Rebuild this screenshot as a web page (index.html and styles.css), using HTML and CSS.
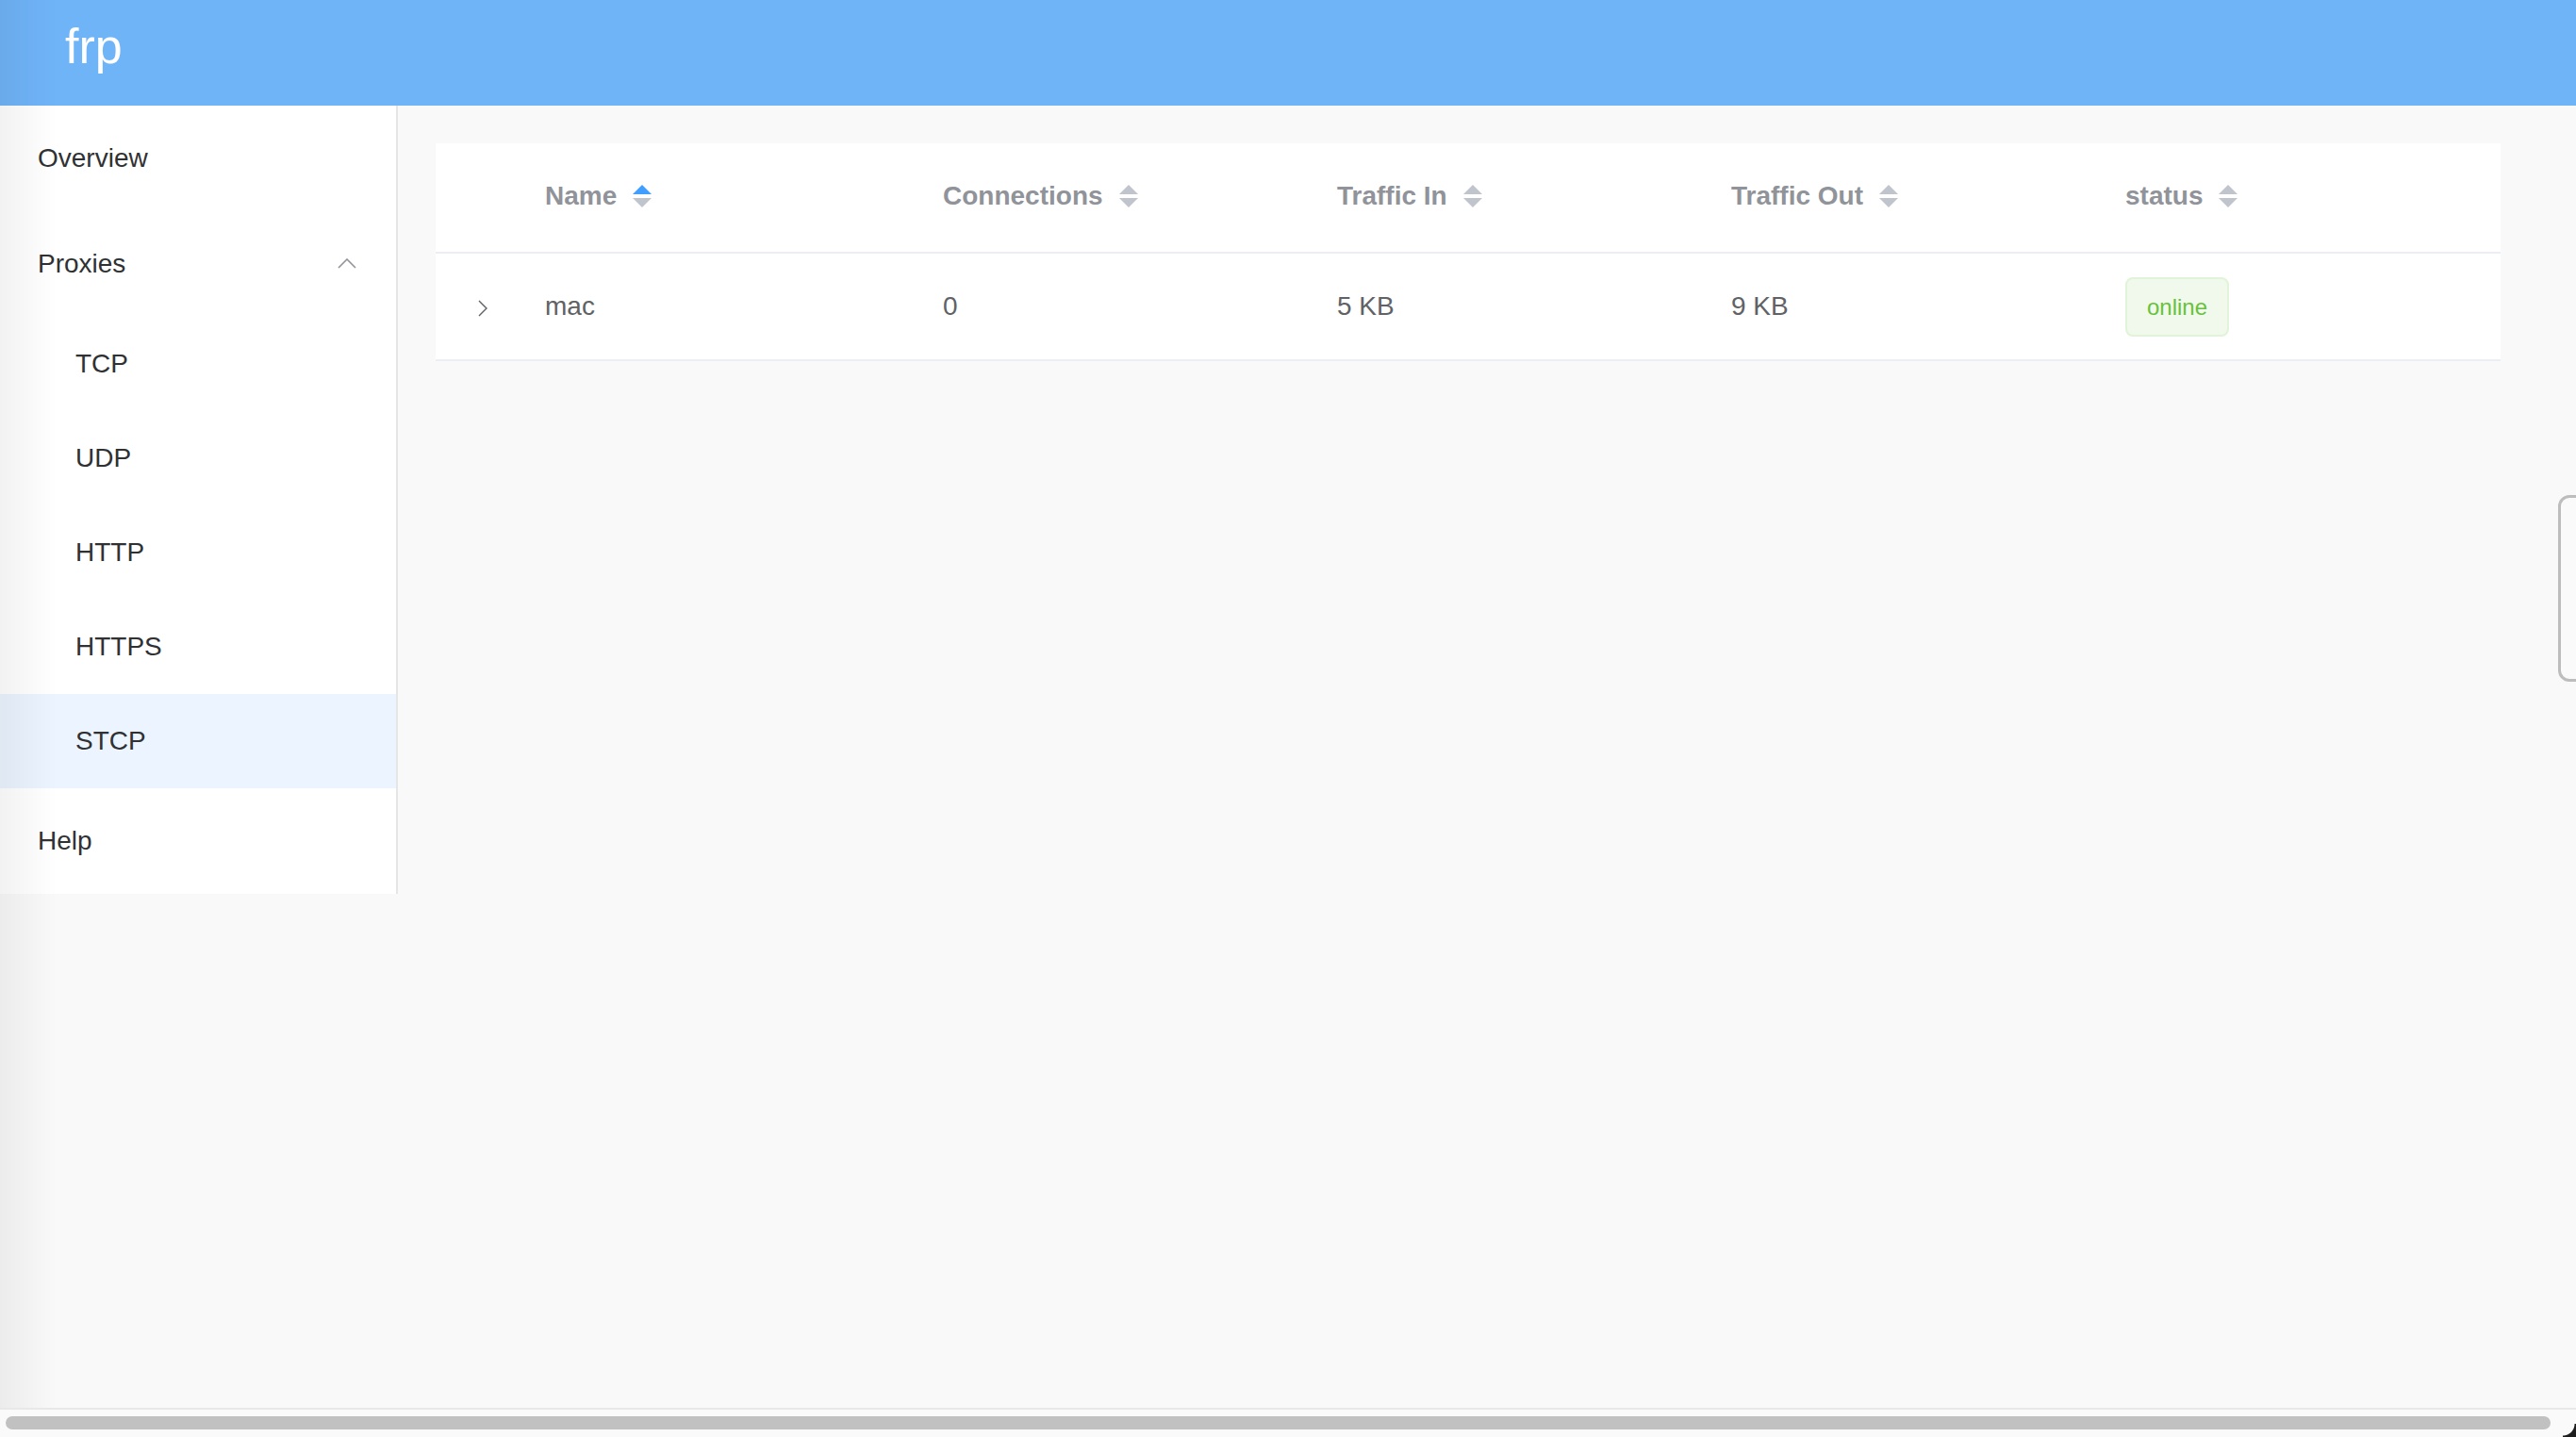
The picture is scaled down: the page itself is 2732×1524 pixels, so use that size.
FILE: index.html
```html
<!DOCTYPE html>
<html lang="en">
<head>
<meta charset="utf-8">
<title>frp</title>
<link rel="stylesheet" href="styles.css">
</head>
<body>
<header class="topbar"><span class="brand">frp</span></header>
<div class="layout">
  <aside class="sidebar">
    <ul class="menu">
      <li class="menu-item">Overview</li>
      <li class="menu-item submenu-title">Proxies
        <svg class="chev" width="20" height="11" viewBox="0 0 20 11"><path d="M1 10 L10 1 L19 10" fill="none" stroke="#909399" stroke-width="1.6"/></svg>
      </li>
      <li class="sub-item">TCP</li>
      <li class="sub-item">UDP</li>
      <li class="sub-item">HTTP</li>
      <li class="sub-item">HTTPS</li>
      <li class="sub-item active">STCP</li>
      <li class="menu-item">Help</li>
    </ul>
  </aside>
  <main class="main">
    <div class="table">
      <div class="th"></div>
      <div class="th"><span>Name</span><span class="caret"><i class="up on"></i><i class="down"></i></span></div>
      <div class="th"><span>Connections</span><span class="caret"><i class="up"></i><i class="down"></i></span></div>
      <div class="th"><span>Traffic In</span><span class="caret"><i class="up"></i><i class="down"></i></span></div>
      <div class="th"><span>Traffic Out</span><span class="caret"><i class="up"></i><i class="down"></i></span></div>
      <div class="th"><span>status</span><span class="caret"><i class="up"></i><i class="down"></i></span></div>

      <div class="td expand"><svg width="10" height="18" viewBox="0 0 10 18"><path d="M1 1 L9 9 L1 17" fill="none" stroke="#606266" stroke-width="1.4"/></svg></div>
      <div class="td">mac</div>
      <div class="td">0</div>
      <div class="td">5 KB</div>
      <div class="td">9 KB</div>
      <div class="td"><span class="tag">online</span></div>
    </div>
  </main>
</div>
<div class="edge-shadow"></div>
<div class="side-handle"></div>
<div class="hscroll"><div class="thumb"></div></div>
<div class="corner"></div>
</body>
</html>
```
FILE: styles.css
```css
* { box-sizing: border-box; }
html, body {
  margin: 0;
  padding: 0;
  height: 1524px;
  overflow: hidden;
}
body {
  background: #f9f9f9;
  font-family: "Liberation Sans", Arial, Helvetica, sans-serif;
  color: #303133;
}
.topbar {
  height: 112px;
  background: #70b4f8;
  display: flex;
  align-items: center;
  padding: 0 0 14px 69px;
}
.brand {
  color: #ffffff;
  font-size: 52px;
  line-height: 56px;
}
.layout {
  display: flex;
  align-items: flex-start;
}
.sidebar {
  width: 422px;
  flex: none;
  background: #ffffff;
  border-right: 2px solid #e6e6e6;
}
.menu {
  list-style: none;
  margin: 0;
  padding: 0;
}
.menu-item {
  height: 112px;
  line-height: 112px;
  padding-left: 40px;
  font-size: 28px;
  color: #303133;
}
.submenu-title {
  display: flex;
  align-items: center;
  justify-content: space-between;
  padding-right: 42px;
}
.chev { display: block; margin-top: -2px; }
.sub-item {
  height: 100px;
  line-height: 100px;
  padding-left: 80px;
  font-size: 28px;
  color: #303133;
}
.sub-item.active { background: #ecf5ff; }

.main {
  flex: 1;
  padding: 40px 80px 40px 40px;
}
.table {
  background: #ffffff;
  display: grid;
  grid-template-columns: 96px 422px repeat(4, 1fr);
}
.th {
  height: 117px;
  border-bottom: 2px solid #ebeef5;
  display: flex;
  align-items: center;
  padding-left: 20px;
  font-size: 28px;
  font-weight: bold;
  color: #909399;
  padding-bottom: 4px;
}
.caret {
  display: inline-flex;
  flex-direction: column;
  justify-content: space-between;
  height: 24px;
  margin-left: 17px;
}
.caret i {
  display: block;
  width: 0;
  height: 0;
  border-left: 10px solid transparent;
  border-right: 10px solid transparent;
}
.caret .up { border-bottom: 10px solid #c0c4cc; }
.caret .down { border-top: 10px solid #c0c4cc; }
.caret .up.on { border-bottom-color: #409eff; }
.td {
  height: 114px;
  border-bottom: 2px solid #ebeef5;
  display: flex;
  align-items: center;
  padding-left: 20px;
  font-size: 28px;
  color: #606266;
}
.td.expand { padding-left: 45px; padding-top: 4px; }
.tag {
  display: inline-block;
  height: 63px;
  line-height: 59px;
  padding: 0 21px;
  border: 2px solid #e1f3d8;
  background: #f0f9eb;
  border-radius: 8px;
  color: #67c23a;
  font-size: 24px;
}

.edge-shadow {
  position: fixed;
  left: 0;
  top: 0;
  bottom: 0;
  width: 60px;
  background: linear-gradient(to right, rgba(0,0,0,0.05), rgba(0,0,0,0));
  pointer-events: none;
}
.side-handle {
  position: fixed;
  left: 2713px;
  top: 525px;
  width: 40px;
  height: 198px;
  border: 3px solid #bdbdbd;
  border-radius: 12px;
  background: #fafafa;
}
.hscroll {
  position: fixed;
  left: 0;
  right: 0;
  bottom: 0;
  height: 31px;
  background: #fafafa;
  border-top: 2px solid #e8e8e8;
  padding: 7px 0 0 6px;
}
.thumb {
  width: 2699px;
  height: 14px;
  border-radius: 7px;
  background: #c1c1c1;
}
.corner {
  position: fixed;
  right: 0;
  bottom: 0;
  width: 14px;
  height: 14px;
  background: radial-gradient(circle at 0 0, rgba(0,0,0,0) 12px, #1e1e1e 13px);
}
```
